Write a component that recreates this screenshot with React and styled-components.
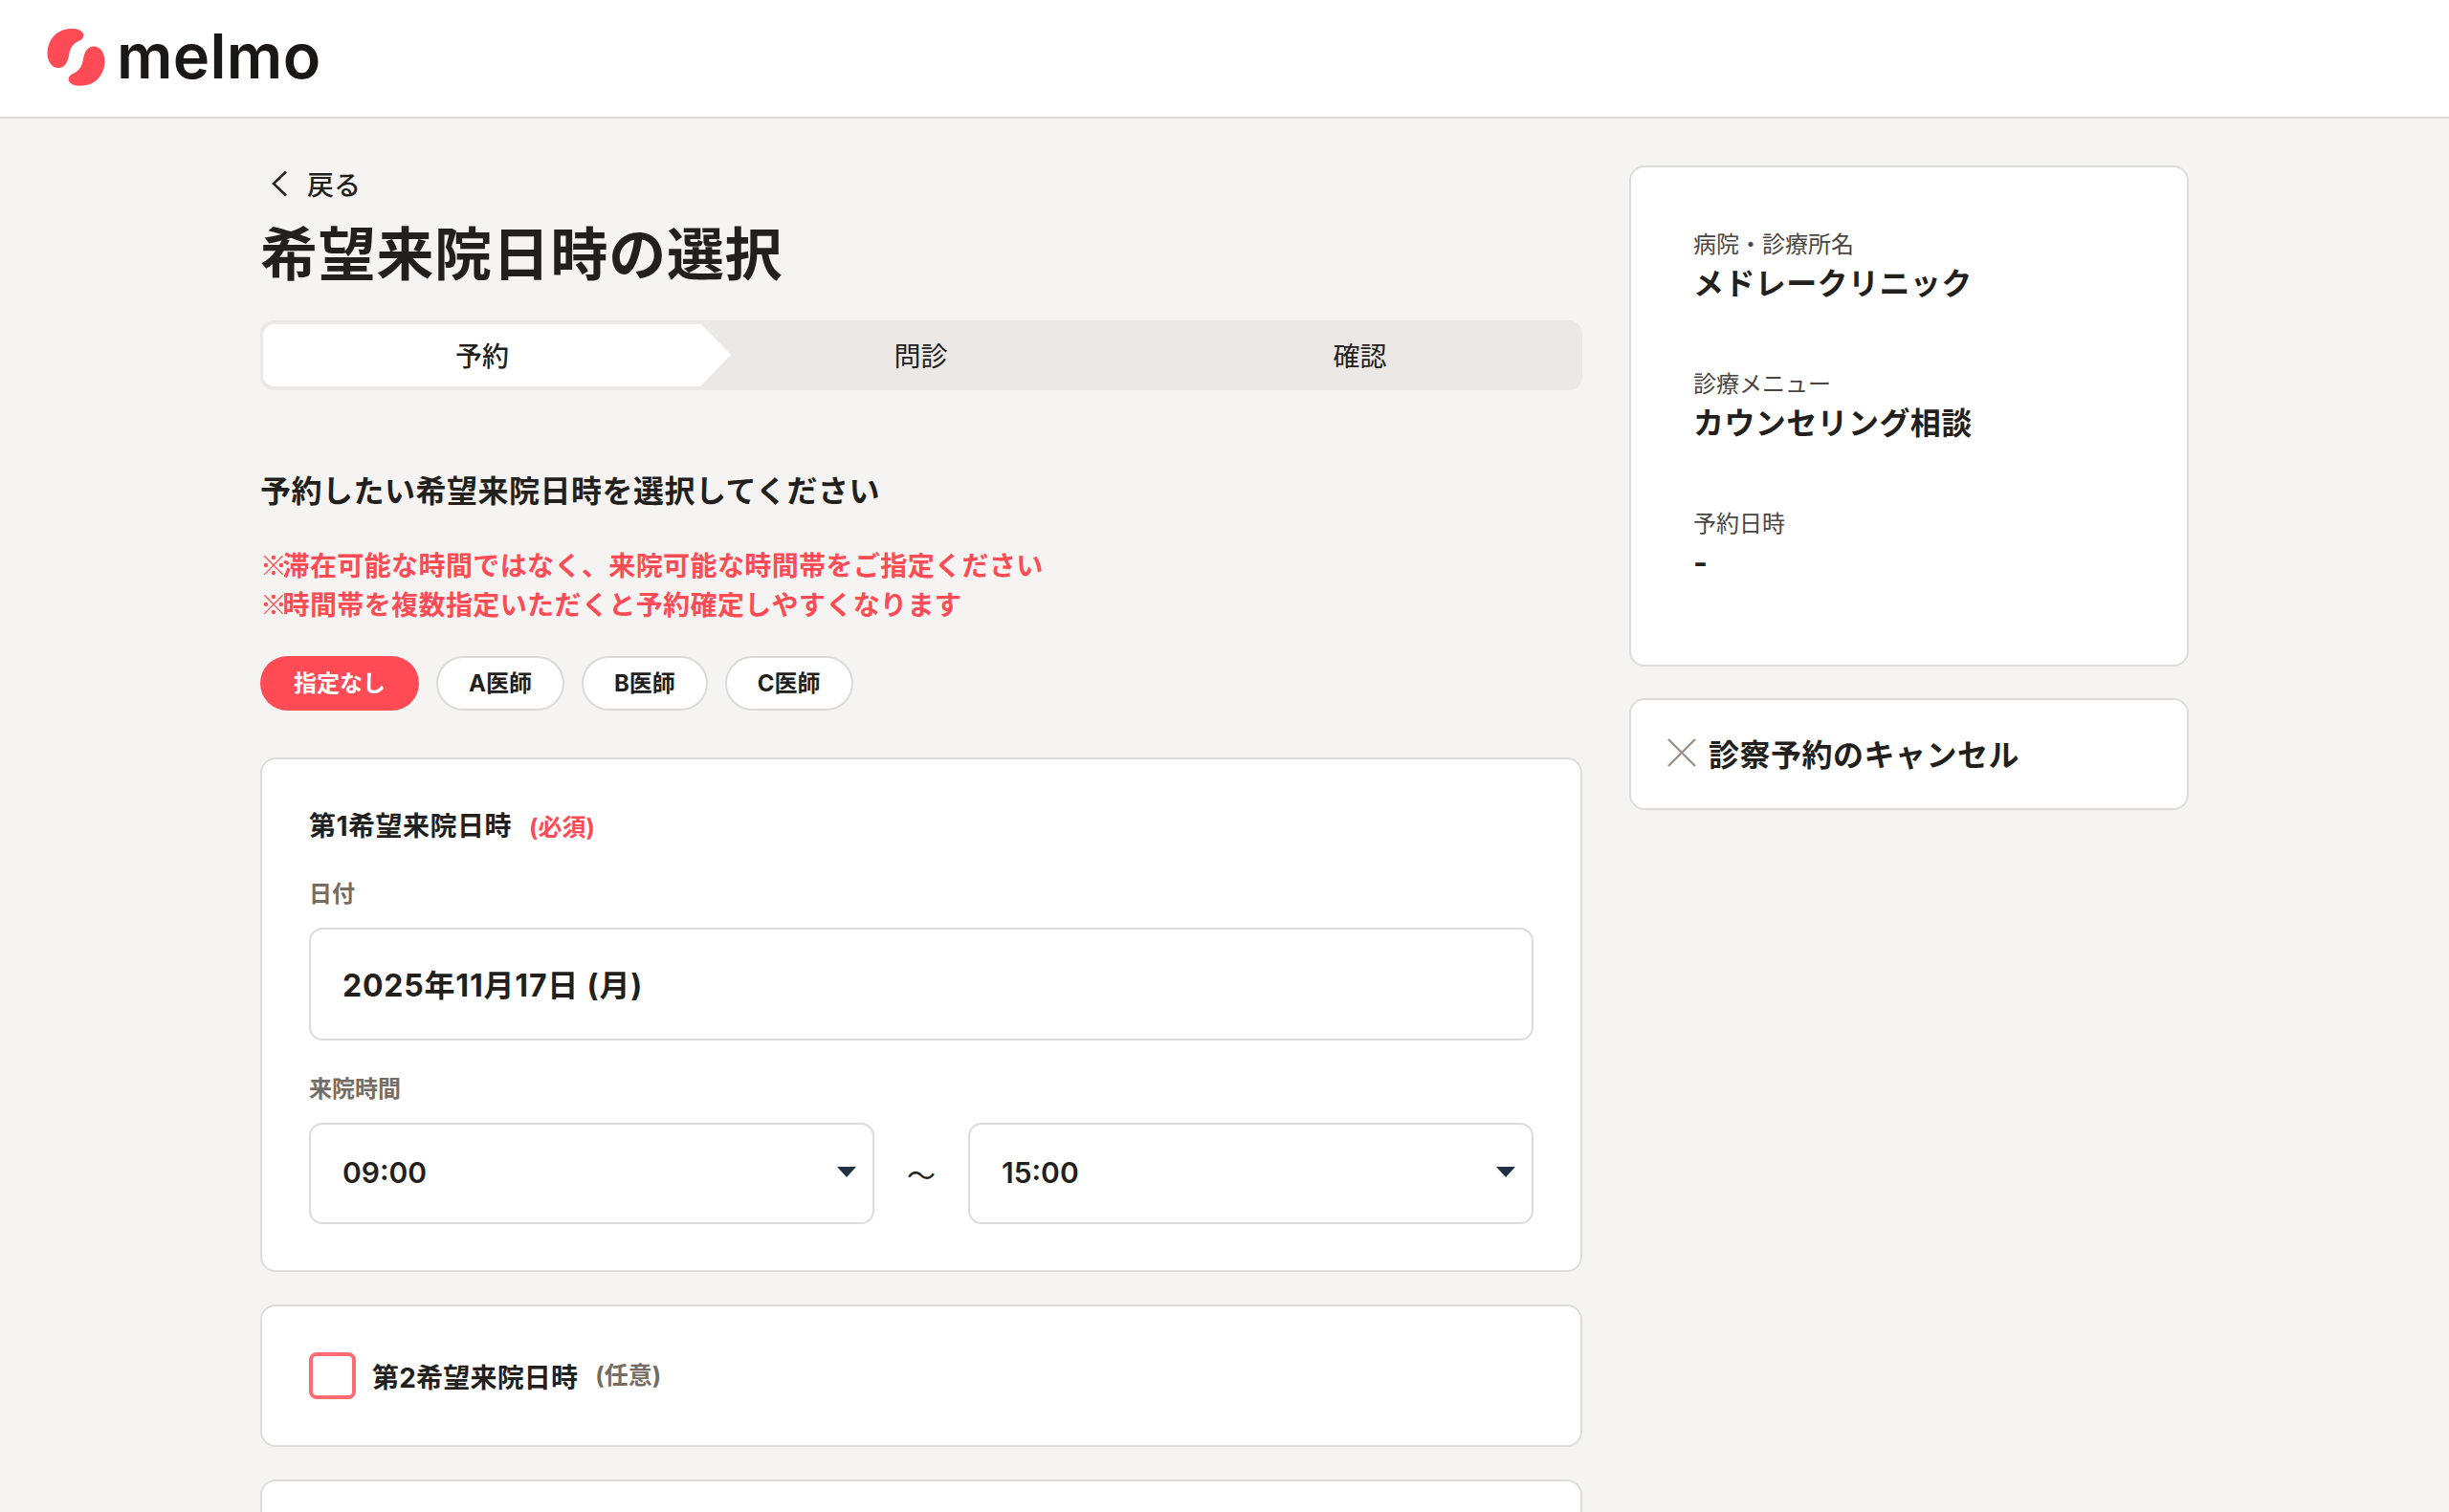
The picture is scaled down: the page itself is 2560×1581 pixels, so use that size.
import React from "react";
import styled, { createGlobalStyle } from "styled-components";

const GlobalStyle = createGlobalStyle`
  * {
    box-sizing: border-box;
  }
  html,
  body {
    margin: 0;
    height: 100%;
    overflow: hidden;
    background: #f5f4f2;
    color: #231f1c;
    font-family: Inter, "Noto Sans CJK JP", sans-serif;
  }
`;

const Header = styled.header`
  height: 124px;
  background: #fff;
  border-bottom: 2px solid #dcdbd9;
  display: flex;
  align-items: flex-start;
  padding: 28px 0 0 47px;
`;

const LogoMark = styled.svg`
  width: 65px;
  height: 63px;
  flex: none;
`;

const LogoText = styled.span`
  font-size: 65px;
  font-weight: 600;
  line-height: 62px;
  letter-spacing: 0.3px;
  color: #1a1716;
  margin-left: 10px;
`;

const Layout = styled.main`
  width: 2016px;
  margin: 0 auto;
  padding-top: 49px;
  display: grid;
  grid-template-columns: 1382px 585px;
  gap: 49px;
  align-items: start;
`;

const BackLink = styled.a`
  display: flex;
  align-items: center;
  gap: 20px;
  height: 40px;
  padding: 0 0 2px 11px;
  font-size: 28px;
  font-weight: 500;
`;

const Title = styled.h1`
  margin: 11px 0 0;
  font-size: 60px;
  line-height: 84px;
  font-weight: 700;
  letter-spacing: 0.7px;
`;

const Steps = styled.div`
  margin-top: 27px;
  height: 73px;
  padding: 4px 3px;
  background: #ebe8e5;
  border-radius: 14px;
  display: grid;
  grid-template-columns: 458px 1fr 1fr;
`;

const Step = styled.div`
  position: relative;
  display: flex;
  align-items: center;
  justify-content: center;
  padding-bottom: 2px;
  font-size: 28px;
  font-weight: ${(p) => (p.$active ? 500 : 400)};
  background: ${(p) => (p.$active ? "#fff" : "transparent")};
  border-radius: 12px 0 0 12px;
  ${(p) =>
    p.$active &&
    `&::after {
      content: "";
      position: absolute;
      left: 100%;
      top: 0;
      border-left: 31px solid #fff;
      border-top: 32.5px solid transparent;
      border-bottom: 32.5px solid transparent;
    }`}
`;

const SectionHeading = styled.h2`
  margin: 84px 0 0;
  font-size: 32px;
  line-height: 44px;
  font-weight: 700;
  letter-spacing: 0.5px;
`;

const Notes = styled.p`
  margin: 34px 0 0;
  font-family: "Noto Sans CJK JP", sans-serif;
  font-size: 28px;
  line-height: 41px;
  font-weight: 700;
  letter-spacing: 0.4px;
  color: #ff4b55;
`;

const NoteMark = styled.span`
  letter-spacing: -4.5px;
`;

const Pills = styled.div`
  margin-top: 34px;
  display: flex;
  gap: 18px;
`;

const Pill = styled.button`
  height: 57px;
  padding: 0 ${(p) => (p.$active ? 35 : 32)}px 4px;
  border-radius: 29px;
  border: ${(p) => (p.$active ? "none" : "2px solid #dcdad8")};
  background: ${(p) => (p.$active ? "#ff4b55" : "#fff")};
  color: ${(p) => (p.$active ? "#fff" : "#231f1c")};
  font-family: inherit;
  font-size: 24px;
  font-weight: 700;
`;

const Card = styled.section`
  margin-top: ${(p) => p.$top || 34}px;
  background: #fff;
  border: 2px solid #dedcda;
  border-radius: 16px;
  padding: ${(p) => p.$padding || "50px 49px 48px"};
  ${(p) => p.$height && `height: ${p.$height}px;`}
`;

const CardTitle = styled.h3`
  margin: 0;
  font-size: 28px;
  line-height: 40px;
  font-weight: 700;
  letter-spacing: 0.5px;
`;

const Tag = styled.span`
  margin-left: 18px;
  font-size: 25px;
  line-height: 1;
  font-weight: 700;
  letter-spacing: 0;
  color: ${(p) => p.$color};
`;

const FieldLabel = styled.div`
  margin: 34px 0 18px;
  font-size: 24px;
  line-height: 34px;
  font-weight: 700;
  color: #756c63;
`;

const DateBox = styled.div`
  height: 118px;
  border: 2px solid #dedcda;
  border-radius: 14px;
  display: flex;
  align-items: center;
  padding: 0 33px 3px;
  font-size: 32px;
  font-weight: 700;
  letter-spacing: 0.8px;
`;

const TimeRow = styled.div`
  display: grid;
  grid-template-columns: 1fr 98px 1fr;
  align-items: center;
`;

const Select = styled.div`
  height: 106px;
  border: 2px solid #dedcda;
  border-radius: 14px;
  display: flex;
  align-items: center;
  justify-content: space-between;
  padding: 0 17px 3px 33px;
  font-size: 30px;
  font-weight: 600;
`;

const Tilde = styled.span`
  text-align: center;
  font-size: 30px;
`;

const CheckRow = styled.label`
  display: flex;
  align-items: center;
  height: 100%;
`;

const CheckBox = styled.span`
  width: 49px;
  height: 49px;
  flex: none;
  border: 4px solid #ff6b72;
  border-radius: 8px;
  margin-right: 17px;
`;

const CheckLabel = styled.span`
  font-size: 28px;
  font-weight: 700;
  letter-spacing: 0.2px;
`;

const Side = styled.aside`
  display: flex;
  flex-direction: column;
  gap: 33px;
`;

const SideCard = styled.div`
  background: #fff;
  border: 2px solid #dedcda;
  border-radius: 16px;
`;

const Summary = styled(SideCard)`
  height: 524px;
  padding: 64px 65px 0;
  display: flex;
  flex-direction: column;
  gap: 65px;
`;

const SummaryLabel = styled.div`
  font-size: 24px;
  line-height: 34px;
  color: #4a4541;
`;

const SummaryValue = styled.div`
  margin-top: 1px;
  font-size: 32px;
  line-height: 46px;
  font-weight: 700;
  letter-spacing: 0.4px;
`;

const CancelCard = styled(SideCard)`
  height: 117px;
  padding: 0 0 4px 38px;
  display: flex;
  align-items: center;
  gap: 13px;
  font-size: 32px;
  font-weight: 700;
  letter-spacing: 0.5px;
`;

const Caret = () => (
  <svg width="20" height="11" viewBox="0 0 20 11">
    <path d="M0 0h20L10 11z" fill="#1f3044" />
  </svg>
);

const BEAN =
  "M122 62C90 66 60 90 57 135C56 165 72 185 92 185C112 185 122 165 126 140C130 118 142 105 160 98C172 92 175 78 165 70C155 60 140 60 122 62Z";

const summary = [
  { label: "病院・診療所名", value: "メドレークリニック" },
  { label: "診療メニュー", value: "カウンセリング相談" },
  { label: "予約日時", value: "-" },
];

const doctors = ["指定なし", "A医師", "B医師", "C医師"];

export default function App() {
  return (
    <>
      <GlobalStyle />
      <Header>
        <LogoMark viewBox="50 55 195 190">
          <g fill="#ff4b55">
            <path d={BEAN} />
            <path transform="rotate(180 147.5 151)" d={BEAN} />
          </g>
        </LogoMark>
        <LogoText>melmo</LogoText>
      </Header>
      <Layout>
        <div>
          <BackLink>
            <svg width="18" height="28" viewBox="0 0 18 28" fill="none">
              <path d="M16 1.5L3 14l13 12.5" stroke="#231f1c" strokeWidth="2.6" />
            </svg>
            戻る
          </BackLink>
          <Title>希望来院日時の選択</Title>
          <Steps>
            <Step $active>予約</Step>
            <Step>問診</Step>
            <Step>確認</Step>
          </Steps>
          <SectionHeading>予約したい希望来院日時を選択してください</SectionHeading>
          <Notes>
            <NoteMark>※</NoteMark>滞在可能な時間ではなく、来院可能な時間帯をご指定ください
            <br />
            <NoteMark>※</NoteMark>時間帯を複数指定いただくと予約確定しやすくなります
          </Notes>
          <Pills>
            {doctors.map((name, i) => (
              <Pill key={name} $active={i === 0}>
                {name}
              </Pill>
            ))}
          </Pills>
          <Card $top={49}>
            <CardTitle>
              第1希望来院日時
              <Tag $color="#ff4b55">(必須)</Tag>
            </CardTitle>
            <FieldLabel>日付</FieldLabel>
            <DateBox>2025年11月17日 (月)</DateBox>
            <FieldLabel>来院時間</FieldLabel>
            <TimeRow>
              <Select>
                09:00
                <Caret />
              </Select>
              <Tilde>〜</Tilde>
              <Select>
                15:00
                <Caret />
              </Select>
            </TimeRow>
          </Card>
          <Card $height={149} $padding="0 49px">
            <CheckRow>
              <CheckBox />
              <CheckLabel>第2希望来院日時</CheckLabel>
              <Tag $color="#756c63">(任意)</Tag>
            </CheckRow>
          </Card>
          <Card $height={200} />
        </div>
        <Side>
          <Summary>
            {summary.map((row) => (
              <div key={row.label}>
                <SummaryLabel>{row.label}</SummaryLabel>
                <SummaryValue>{row.value}</SummaryValue>
              </div>
            ))}
          </Summary>
          <CancelCard>
            <svg width="30" height="30" viewBox="0 0 30 30" fill="none">
              <path d="M1 1l28 28M29 1L1 29" stroke="#9a9189" strokeWidth="2.4" />
            </svg>
            診察予約のキャンセル
          </CancelCard>
        </Side>
      </Layout>
    </>
  );
}
